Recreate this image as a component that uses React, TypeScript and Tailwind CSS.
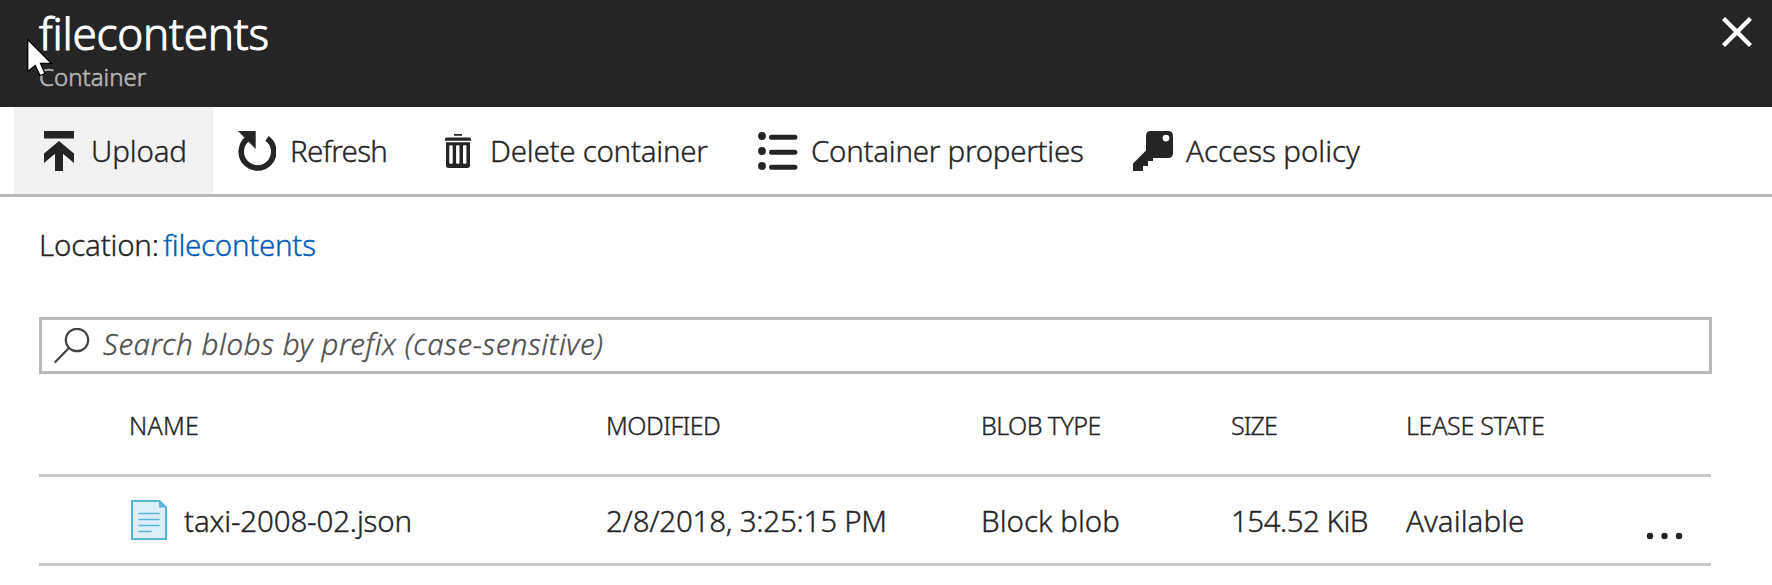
import type { ReactNode } from "react";

function UploadIcon() {
  return (
    <svg width="30" height="40" viewBox="0 0 30 40" fill="#252525">
      <path d="M0 0h30v7.500H0z" />
      <path d="M15 10 30 22.500V32l-11-9.300V40h-8V22.700L0 32v-9.500z" />
    </svg>
  );
}

function RefreshIcon() {
  return (
    <svg width="38" height="40" viewBox="0 0 38 40">
      <path d="M10.200 7.300A16.300 16.300 0 1 0 29 7.400" fill="none" stroke="#252525" strokeWidth="5.600" />
      <path d="M0 0h17.700v18z" fill="#252525" />
    </svg>
  );
}

function TrashIcon() {
  return (
    <svg width="26" height="34" viewBox="0 0 26 34" fill="#252525">
      <path d="M9 0h8v1.800H9zM0 5q0-1.500 1.500-1.500h23Q26 3.500 26 5v1.700H0z" />
      <path
        fillRule="evenodd"
        d="M1 8.300h24V31.500q0 2.500-3 2.500H4q-3 0-3-2.500zM4.300 12v17q0 .8.800.8h1.800q.8 0 .8-.8V12q0-.8-.8-.8H5.100q-.8 0-.8.8zM11.100 12v17q0 .8.800.8h1.800q.8 0 .8-.8V12q0-.8-.8-.8h-1.800q-.8 0-.8.8zM18 12v17q0 .8.800.8h1.800q.8 0 .8-.8V12q0-.8-.8-.8h-1.800q-.8 0-.8.8z"
      />
    </svg>
  );
}

function ListIcon() {
  return (
    <svg width="40" height="38" viewBox="0 0 40 38" fill="#252525">
      <circle cx="4" cy="4" r="3.900" />
      <circle cx="4" cy="19" r="3.900" />
      <circle cx="4" cy="34" r="3.900" />
      <rect x="11" y="2.800" width="28.400" height="5" rx="2.500" />
      <rect x="11" y="17.800" width="28.400" height="5" rx="2.500" />
      <rect x="11" y="32.800" width="28.400" height="5" rx="2.500" />
    </svg>
  );
}

function KeyIcon() {
  return (
    <svg width="40" height="40" viewBox="0 0 40 40" fill="#252525">
      <path
        fillRule="evenodd"
        d="M18 0h17q5 0 5 5v17q0 5-5 5H20v3h-5v5h-5v5H0v-7.500L13 19.500V5q0-5 5-5zM33 3.700a3.400 3.400 0 1 0 0 6.800 3.400 3.400 0 0 0 0-6.800z"
      />
    </svg>
  );
}

function CloseIcon() {
  return (
    <svg width="30" height="30" viewBox="0 0 30 30" stroke="#fff" strokeWidth="4.400">
      <path d="M1.500 1.500l27 27M28.500 1.500l-27 27" />
    </svg>
  );
}

function SearchIcon() {
  return (
    <svg width="36" height="36" viewBox="0 0 36 36" fill="none" stroke="#444" strokeWidth="2.200">
      <circle cx="23" cy="12" r="11.200" />
      <path d="M14.900 20.100 1.300 34" strokeLinecap="round" />
    </svg>
  );
}

function FileIcon() {
  return (
    <svg width="36" height="40" viewBox="0 0 36 40">
      <path d="M1 1h27.500L35 7.500V39H1z" fill="#dceff8" stroke="#59b4d9" strokeWidth="2" />
      <path d="M28 0 36 7.500H28z" fill="#59b4d9" />
      <path d="M8 13.500h20M8 19.500h20M8 25.500h20M8 31.500h12" stroke="#59b4d9" strokeWidth="1.600" strokeLinecap="round" />
    </svg>
  );
}

function Cursor() {
  return (
    <svg className="absolute left-[27px] top-[38px]" width="27" height="40" viewBox="0 0 27 40">
      <path
        d="M.7 1.500V33.500L8.300 27.500 13 37.500 18 35.500 13.500 25.300H24.300z"
        fill="#fff"
        stroke="#000"
        strokeWidth="1.300"
      />
    </svg>
  );
}

function Tool({ icon, label, className, gap }: { icon: ReactNode; label: string; className: string; gap: string }) {
  return (
    <button className={`flex h-full shrink-0 items-center whitespace-nowrap ${className}`}>
      <span className="shrink-0">{icon}</span>
      <span className={`pt-[2px] ${gap}`}>{label}</span>
    </button>
  );
}

export default function App() {
  return (
    <div className="h-[585px] w-[1772px] overflow-hidden bg-white font-['Noto_Sans','Open_Sans',sans-serif] text-[29.5px] font-light text-[#252525] [-webkit-text-stroke:0.35px_currentColor]">
      <header className="relative flex h-[107px] justify-between bg-[#252525] pl-[39px] pr-[20px]">
        <div className="pt-[3px]">
          <h1 className="text-[44px] leading-[60px] tracking-[-0.22px] text-white [-webkit-text-stroke:1px_currentColor]">filecontents</h1>
          <p className="text-[24px] leading-[28px] tracking-[0.03px] text-[#b5b5b5] [-webkit-text-stroke:0.6px_currentColor]">Container</p>
        </div>
        <button className="h-[30px] pt-[17px]" aria-label="Close">
          <CloseIcon />
        </button>
        <Cursor />
      </header>

      <nav className="flex h-[90px] border-b-[3px] border-[#bababa] pl-[14px]">
        <Tool icon={<UploadIcon />} label="Upload" className="w-[199px] bg-[#f2f2f2] pl-[30px] tracking-[-0.15px]" gap="ml-[17px]" />
        <Tool icon={<RefreshIcon />} label="Refresh" className="w-[232px] pl-[25px] tracking-[-0.65px]" gap="ml-[14px]" />
        <Tool icon={<TrashIcon />} label="Delete container" className="w-[313px] tracking-[-0.25px]" gap="ml-[19px]" />
        <Tool icon={<ListIcon />} label="Container properties" className="w-[375px] tracking-[-0.27px]" gap="ml-[13px]" />
        <Tool icon={<KeyIcon />} label="Access policy" className="tracking-[-0.04px]" gap="ml-[13px]" />
      </nav>

      <main className="pl-[39px] pr-[61px] pt-[28px]">
        <p className="flex leading-[40px]">
          <span className="w-[124px] tracking-[-0.2px]">Location:</span>
          <a className="tracking-[-0.27px] text-[#015cb8]">filecontents</a>
        </p>

        <div className="-mr-px mt-[52px] flex h-[57px] items-center border-[3px] border-[#bababa] pl-[12px]">
          <SearchIcon />
          <span className="-mt-[2px] ml-[13px] tracking-[0.59px] text-[#505050] italic">Search blobs by prefix (case-sensitive)</span>
        </div>

        <div className="grid h-[103px] grid-cols-[476px_375px_250px_175px_1fr] items-center border-b-[3px] border-[#cacaca] pt-[4px] text-[25px]">
          <span className="pl-[90px] tracking-[0.26px]">NAME</span>
          <span className="pl-[91px] tracking-[-0.53px]">MODIFIED</span>
          <span className="pl-[91px] tracking-[-0.57px]">BLOB TYPE</span>
          <span className="pl-[91px] tracking-[-0.93px]">SIZE</span>
          <span className="pl-[91px] tracking-[-0.28px]">LEASE STATE</span>
        </div>

        <div className="grid h-[89px] grid-cols-[476px_375px_250px_175px_1fr] items-center border-b-[3px] border-[#cacaca]">
          <div className="flex items-center pl-[92px]">
            <FileIcon />
            <span className="ml-[17px] pt-[3px] tracking-[-0.15px]">taxi-2008-02.json</span>
          </div>
          <span className="whitespace-nowrap pl-[91px] pt-[3px] tracking-[-0.22px]">2/8/2018, 3:25:15 PM</span>
          <span className="whitespace-nowrap pl-[91px] pt-[3px] tracking-[0px]">Block blob</span>
          <span className="whitespace-nowrap pl-[91px] pt-[3px] tracking-[-0.5px]">154.52 KiB</span>
          <div className="flex items-center justify-between pl-[91px] pr-[27px]">
            <span className="pt-[3px] tracking-[0.05px]">Available</span>
            <svg className="mt-[31px]" width="38" height="8" viewBox="0 0 38 8" fill="#252525">
              <circle cx="4" cy="4" r="3.200" />
              <circle cx="18.500" cy="4" r="3.200" />
              <circle cx="33" cy="4" r="3.200" />
            </svg>
          </div>
        </div>
      </main>
    </div>
  );
}
